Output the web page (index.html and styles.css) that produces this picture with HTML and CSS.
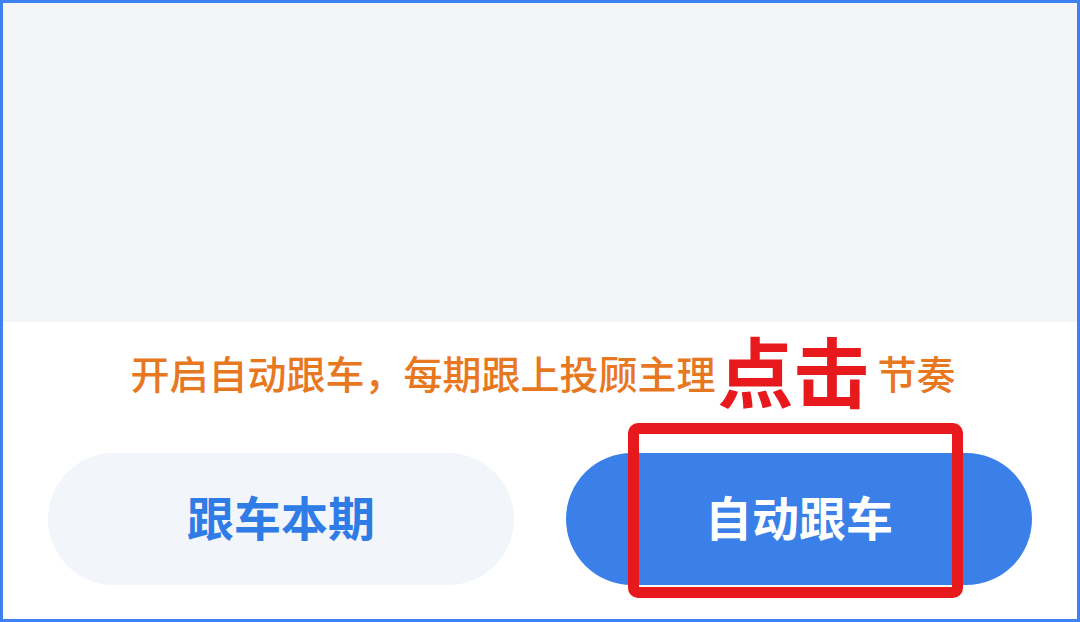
FILE: index.html
```html
<!DOCTYPE html>
<html lang="zh-CN">
<head>
<meta charset="utf-8">
<title>自动跟车</title>
<link rel="stylesheet" href="styles.css">
</head>
<body>
<div class="frame">
  <div class="top-area"></div>
  <div class="sheet">
    <div class="tip">
      <span class="tip-text">开启自动跟车，每期跟上投顾主理</span>
      <span class="mark-text">点击</span>
      <span class="tip-text">节奏</span>
    </div>
    <div class="actions">
      <div class="btn btn-light">跟车本期</div>
      <div class="btn btn-primary">自动跟车</div>
    </div>
    <div class="mark-box"></div>
  </div>
</div>
</body>
</html>
```

FILE: styles.css
```css
html, body {
  margin: 0;
  padding: 0;
  background: #ffffff;
}

.frame {
  box-sizing: border-box;
  width: 1080px;
  height: 622px;
  border: 3px solid #3d82f0;
  background: #ffffff;
  display: flex;
  flex-direction: column;
  overflow: hidden;
  font-family: "Noto Sans CJK SC", "Noto Sans", sans-serif;
}

.top-area {
  height: 319px;
  background: #f4f5f9;
  flex: none;
}

.sheet {
  position: relative;
  flex: 1;
  display: flex;
  flex-direction: column;
}

.tip {
  height: 80px;
  margin-top: 10px;
  padding-left: 6px;
  display: flex;
  align-items: center;
  justify-content: center;
}

.tip-text {
  font-size: 39px;
  line-height: 1;
  color: #e8781f;
  font-weight: 500;
}

.mark-text {
  font-size: 76px;
  line-height: 1;
  font-weight: 700;
  color: #e8191c;
  margin: -6px 8px 0 2px;
}

.actions {
  margin-top: 41px;
  padding: 0 45px;
  display: flex;
  gap: 52px;
}

.btn {
  box-sizing: border-box;
  flex: 1;
  height: 132px;
  padding-bottom: 8px;
  border-radius: 66px;
  display: flex;
  align-items: center;
  justify-content: center;
  font-size: 47px;
  font-weight: 700;
  letter-spacing: 0;
}

.btn-light {
  background: #f2f5fa;
  color: #2f7ce6;
}

.btn-primary {
  background: #3b80e8;
  color: #ffffff;
}

.mark-box {
  position: absolute;
  left: 625px;
  top: 101px;
  width: 335px;
  height: 175px;
  box-sizing: border-box;
  border: 11px solid #e8191c;
  border-radius: 10px;
}
```
